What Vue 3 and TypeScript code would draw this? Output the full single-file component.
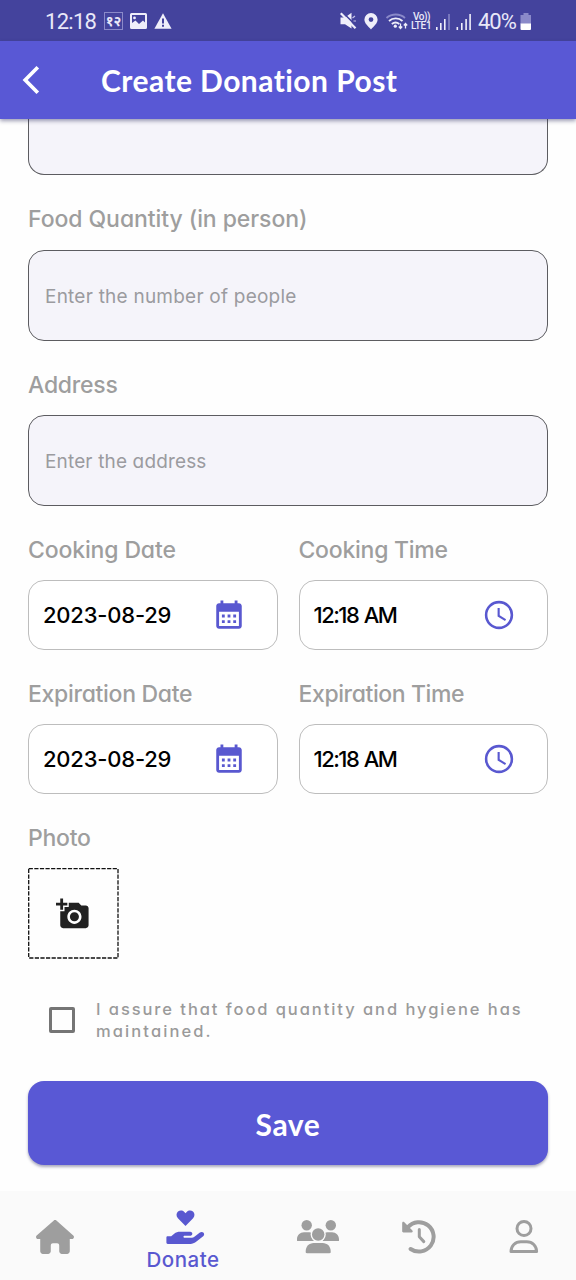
<script setup lang="ts">
import { ref } from 'vue'

interface Slot {
  label: string
  value: string
  kind: 'date' | 'time'
  key: string
}

const slots: Slot[] = [
  { key: 'cd', label: 'Cooking Date', value: '2023-08-29', kind: 'date' },
  { key: 'ct', label: 'Cooking Time', value: '12:18 AM', kind: 'time' },
  { key: 'ed', label: 'Expiration Date', value: '2023-08-29', kind: 'date' },
  { key: 'et', label: 'Expiration Time', value: '12:18 AM', kind: 'time' },
]

const assured = ref(false)
</script>

<template>
  <div class="screen">
    <div class="status">
      <span class="clock">12:18</span>
      <span class="lang">१२</span>
      <svg class="pic" width="17" height="16" viewBox="0 0 17 16">
        <path fill="#efeefa" fill-rule="evenodd" d="M1.500 0h14A1.500 1.500 0 0 1 17 1.500v13a1.500 1.500 0 0 1-1.500 1.500h-14A1.500 1.500 0 0 1 0 14.500v-13A1.500 1.500 0 0 1 1.500 0zM2 2v8l3.500-2.500L9 11l4-3.500 2 2V2zM4.500 3.500a1.400 1.400 0 1 1 0 2.800a1.400 1.400 0 0 1 0-2.800z" />
      </svg>
      <svg class="warn" width="18" height="16" viewBox="0 0 18 16">
        <path fill="#efeefa" d="M9 .3 17.600 15.700H.4z" />
        <path fill="#44439d" d="M8 5.500h2v5H8zM8 11.800h2v2H8z" />
      </svg>
      <span class="grow"></span>
      <svg class="radio" width="70" height="20" viewBox="338 10 70 20">
        <path fill="#efeefa" d="M340.500 16.500h4.500l6.500-4.700v15.800L345 23.200h-4.500z" />
        <path d="M342.300 11 357.500 26.200" stroke="#44439d" stroke-width="1.700" />
        <path d="M340.800 12.300 355.500 27.300" stroke="#efeefa" stroke-width="2.200" />
        <path d="M352.500 17l2.500-2M353.500 20h2.500" stroke="#c5c4e8" stroke-width="1.200" />
        <path fill="#efeefa" fill-rule="evenodd" d="M371 12a6.600 6.600 0 0 1 6.600 6.600c0 4-4 7-6.600 9.900-2.600-2.900-6.600-5.900-6.600-9.900A6.600 6.600 0 0 1 371 12zm0 4.200a2.400 2.400 0 1 0 0 4.800a2.400 2.400 0 0 0 0-4.800z" />
        <g fill="none" stroke="#efeefa" stroke-width="1.800">
          <path d="M386.500 17a14 14 0 0 1 18.500 0" stroke="#8a89c9" />
          <path d="M389 20a10 10 0 0 1 13.500 0" />
          <path d="M391.800 23a6 6 0 0 1 7.500 0" />
        </g>
        <circle cx="395.300" cy="25.200" r="1.600" fill="#efeefa" />
        <path d="M400.500 22.500v5M398.800 25.500l1.700 2 1.700-2M405.500 27.500v-5M403.800 24.500l1.700-2 1.700 2" fill="none" stroke="#efeefa" stroke-width="1.300" />
      </svg>
      <span class="volte"><span class="vo">Vo))</span><span>LTE1</span></span>
      <svg class="bars" width="37" height="18" viewBox="435 11 37 18">
        <g fill="#efeefa">
          <path d="M436 26h1.600v3H436zM440 22h1.600v7H440zM444 18h1.600v11H444z" />
          <path d="M456.500 26h1.600v3h-1.600zM461 22h1.600v7H461zM465.300 18h1.600v11h-1.600zM469.300 13h1.600v16h-1.600z" />
        </g>
        <path fill="#7877bd" d="M448 13h2v16h-2z" />
      </svg>
      <span class="pct">40%</span>
      <svg class="batt" width="12" height="17" viewBox="0 0 12 17">
        <path fill="#8a89c9" d="M3.500 0h5v2H11v9H.5V2h3z" />
        <path fill="#fff" d="M.5 10.500H11V16a1 1 0 0 1-1 1H1.500a1 1 0 0 1-1-1z" />
      </svg>
    </div>

    <header class="bar">
      <svg class="back" width="20" height="30" viewBox="0 0 20 30">
        <path d="M16.800 2.300 4.200 15 16.800 27.700" fill="none" stroke="#fff" stroke-width="3.700" />
      </svg>
      <h1>Create Donation Post</h1>
    </header>

    <main class="form">
      <div class="input first"></div>
      <label class="label tall l1">Food Quantity (in person)</label>
      <div class="input"><span class="hint1">Enter the number of people</span></div>
      <label class="label l2">Address</label>
      <div class="input"><span class="hint2">Enter the address</span></div>

      <div class="grid">
        <div v-for="s in slots" :key="s.key">
          <div class="label" :class="s.key">{{ s.label }}</div>
          <div class="slot">
            <span :class="s.kind">{{ s.value }}</span>
            <svg :class="'i-' + s.kind" width="34" height="34" viewBox="0 0 24 24" fill="#5958d0">
              <path v-if="s.kind === 'date'" d="M7 11H9V13H7V11M21 5V19C21 20.110 20.110 21 19 21H5C3.890 21 3 20.100 3 19V5C3 3.900 3.900 3 5 3H6V1H8V3H16V1H18V3H19C20.110 3 21 3.900 21 5M5 19H19V9H5V19M15 13V11H17V13H15M11 13V11H13V13H11M7 15H9V17H7V15M15 17V15H17V17H15M11 17V15H13V17H11Z" />
              <path v-else fill-rule="evenodd" d="M12 2a10 10 0 1 0 0 20a10 10 0 0 0 0-20zM12 3.800a8.200 8.200 0 1 1 0 16.400a8.200 8.200 0 0 1 0-16.400zM12.500 7H11v6l5.250 3.150.75-1.230-4.500-2.670z" />
            </svg>
          </div>
        </div>
      </div>

      <div class="label ph">Photo</div>
      <div class="photo">
        <svg class="dash" width="91" height="91" viewBox="0 0 91 91">
          <rect x=".7" y=".7" width="89.300" height="89.300" fill="none" stroke="#111" stroke-width="1.300" stroke-dasharray="4.200 1.400" />
        </svg>
        <svg class="cam" width="34" height="34" viewBox="0 0 24 24" fill="#212121">
          <path d="M3 4V1h2v3h3v2H5v3H3V6H0V4h3zm3 6V7h3V4h7l1.830 2H21c1.100 0 2 .9 2 2v12c0 1.100-.9 2-2 2H5c-1.100 0-2-.9-2-2V10h3zm7 9c2.760 0 5-2.240 5-5s-2.240-5-5-5-5 2.240-5 5 2.240 5 5 5zm-3.200-5c0 1.770 1.430 3.200 3.200 3.200s3.200-1.430 3.200-3.200-1.430-3.200-3.200-3.200-3.200 1.430-3.200 3.200z" />
        </svg>
      </div>

      <div class="assure" @click="assured = !assured">
        <span class="box" :class="{ on: assured }"></span>
        <p><span class="a1">I assure that food quantity and hygiene has</span><br /><span class="a2">maintained.</span></p>
      </div>

      <button class="save">Save</button>
    </main>

    <nav class="tabs">
      <svg class="t-home" width="38" height="34" viewBox="0 0 576 512" fill="#9e9e9e">
        <path d="M575.800 255.500c0 18-15 32.100-32 32.100h-32l.7 160.200c0 2.700-.2 5.400-.5 8.100V472c0 22.100-17.900 40-40 40H392c-22.100 0-40-17.900-40-40V384c0-17.700-14.300-32-32-32H256c-17.700 0-32 14.300-32 32v88c0 22.100-17.900 40-40 40H104c-22.100 0-40-17.900-40-40V287.600H32c-18 0-32-14-32-32.100c0-9 3-17 10-24L266.400 8c7-7 15-8 22-8s15 2 21 7L564.800 231.500c8 7 12 15 11 24z" />
      </svg>
      <div class="t-donate">
        <svg width="40" height="36" viewBox="0 0 40 36" fill="#5958d0">
          <path d="M20.500 16 12.900 8.300C11 6.300 11.100 3.200 13 1.600c2-1.600 4.600-1.300 6.300.4l1.200 1.200L21.700 2c1.700-1.700 4.300-2 6.300-.4 1.900 1.600 2 4.700.1 6.700z" />
          <path d="M2.700 26.300h3.500l3-2.600c1.700-1.400 3.700-2 5.800-2h10.300c1.300 0 2.200 1 2 2.200-.2 1.100-1.100 1.900-2.200 1.900h-5.600c-.6 0-1 .4-1 1s.4 1 1 1h7.300c1 0 1.800-.4 2.600-1l5.500-4.300c1.100-.9 2.800-.8 3.700.3.900 1.100.7 2.600-.4 3.400l-7.400 5.900c-1.500 1.200-3.300 1.800-5.200 1.800H2.700c-.8 0-1.300-.5-1.300-1.300v-5c0-.8.500-1.300 1.300-1.300z" />
        </svg>
        <span>Donate</span>
      </div>
      <svg class="t-group" width="42" height="34" viewBox="0 0 42 34" fill="#9e9e9e">
        <circle cx="9.700" cy="5.300" r="5.200" />
        <circle cx="33.800" cy="5.300" r="5.200" />
        <path d="M0 20.700v-1.500c0-4 3-7 7-7h5.200c1 0 1.800.2 2.600.5-.8 3 .1 6 2.200 8.300H.8a.8.800 0 0 1-.8-.3zM42 20.700v-1.500c0-4-3-7-7-7h-4.700c-1 0-1.800.2-2.600.5.800 3-.1 6-2.200 8.300h15.700a.8.800 0 0 0 .8-.3z" />
        <circle cx="21.200" cy="14.500" r="7.600" fill="#fafafa" />
        <circle cx="21.200" cy="14.500" r="6.200" />
        <path d="M8.700 32v-1c0-4.400 3.600-8 8-8h9c4.400 0 8 3.600 8 8v1c0 .8-.5 1.200-1.200 1.200H9.900c-.7 0-1.200-.4-1.200-1.200z" />
      </svg>
      <svg class="t-history" width="36" height="35" viewBox="0 0 36 35">
        <path d="M6.800 7.300A14.700 14.700 0 1 1 9.600 29" fill="none" stroke="#9e9e9e" stroke-width="4" stroke-linecap="round" />
        <path d="M1.200 2.900c0-1 1.200-1.500 1.900-.8l8.300 8.300c.7.700.2 2-.8 2H2.400c-.7 0-1.200-.5-1.200-1.200z" fill="#9e9e9e" />
        <path d="M18.300 9.500v7.300l4.500 4.800" fill="none" stroke="#9e9e9e" stroke-width="3" stroke-linecap="round" stroke-linejoin="round" />
      </svg>
      <svg class="t-user" width="30" height="34" viewBox="0 0 30 34" fill="none" stroke="#9e9e9e" stroke-width="3">
        <circle cx="15" cy="8.500" r="7" />
        <path d="M2 31.500c0-5.700 4.300-9.800 9.800-9.800h6c5.500 0 9.800 4.100 9.800 9.800z" stroke-linejoin="round" />
      </svg>
    </nav>
  </div>
</template>

<style>
body {
  margin: 0;
  background: #fff;
}
</style>

<style scoped>
.screen {
  width: 576px;
  height: 1280px;
  display: flex;
  flex-direction: column;
  overflow: hidden;
  background: #fefefe;
  font-family: Inter, "Liberation Sans", sans-serif;
  font-feature-settings: "cv11";
}
.screen *, .screen { box-sizing: border-box; }
svg { display: block; flex: none; }

.status {
  height: 41px;
  flex: none;
  display: flex;
  align-items: center;
  background: #44439d;
  color: #e9e8f8;
  font-family: Roboto, sans-serif;
  padding: 1px 44px 0 45px;
}
.clock { font-size: 22px; letter-spacing: -0.7px; width: 59px; white-space: nowrap; }
.lang {
  width: 19px;
  height: 18px;
  border: 1px solid #8a89c9;
  font: 700 14px/16px "Noto Sans", sans-serif;
  text-align: center;
}
.pic { margin-left: 7px; }
.warn { margin-left: 7px; }
.grow { flex: 1; }
.volte {
  width: 24px;
  margin-left: 3px;
  font-size: 10px;
  line-height: 9px;
  font-weight: 500;
  letter-spacing: -0.35px;
  display: flex;
  flex-direction: column;
  white-space: nowrap;
}
.vo { padding-left: 2px; letter-spacing: -0.5px; }
.pct { font-size: 22px; width: 42px; margin-left: 6px; letter-spacing: -1px; }

.bar {
  height: 78px;
  flex: none;
  display: flex;
  align-items: center;
  background: #5958d5;
  box-shadow: 0 2px 4px rgba(40, 40, 90, .45);
  z-index: 1;
  padding-left: 21px;
}
.bar h1 {
  margin: 0 0 0 60px;
  color: #fff;
  font: 700 30px/40px Lato, sans-serif;
  letter-spacing: 0.450px;
}

.form { padding: 0 28px; flex: none; height: 1072px; }
.input {
  height: 91px;
  border: 1px solid #5c5c60;
  border-radius: 16px;
  background: #f5f4fa;
  display: flex;
  align-items: center;
  padding: 1px 0 0 16px;
  color: #9b9b9f;
  font-size: 19px;
  white-space: nowrap;
}
.input.first { height: 56px; border-top: 0; border-radius: 0 0 16px 16px; }
.label {
  display: block;
  height: 74px;
  padding-top: 29px;
  color: #9e9e9e;
  font-size: 23px;
  line-height: 30px;
  font-weight: 500;
  letter-spacing: -0.250px;
  white-space: nowrap;
}
.label.tall { height: 75px; padding-top: 29px; }
.label.l1 { letter-spacing: -0.070px; }
.label.cd { letter-spacing: -0.140px; }
.label.ed { letter-spacing: -0.300px; }
.label.et { letter-spacing: -0.400px; }
.hint1 { letter-spacing: 0.230px; }
.hint2 { letter-spacing: 0.150px; }
.grid { display: grid; grid-template-columns: 250px 249.500px; column-gap: 20.500px; }
.slot {
  height: 70px;
  border: 1px solid #bdbdbd;
  border-radius: 16px;
  background: #fff;
  display: flex;
  align-items: center;
  justify-content: space-between;
  padding: 0 31px 0 14px;
  color: #000;
  font-size: 22px;
  font-weight: 500;
}
.date { letter-spacing: -0.200px; }
.time { letter-spacing: -1.500px; word-spacing: 1px; }
.i-date { margin-top: 2px; }
.photo { width: 91px; height: 91px; display: grid; place-items: center; }
.photo > svg { grid-area: 1 / 1; }
.cam { margin-right: 2px; }
.assure {
  height: 122px;
  display: flex;
  align-items: center;
  padding-left: 21px;
}
.box { width: 26px; height: 26px; border: 3px solid #757575; border-radius: 2px; }
.box.on { background: #5958d5; }
.assure p {
  margin: -1px 0 0 21px;
  color: #9a9a9a;
  font-size: 16.500px;
  line-height: 22px;
  font-weight: 500;
  letter-spacing: 1.930px;
  white-space: nowrap;
}
.a2 { letter-spacing: 2.100px; }
.save {
  display: block;
  width: 520px;
  height: 84px;
  border: 0;
  border-radius: 16px;
  background: #5958d5;
  box-shadow: 0 2px 3px rgba(40, 40, 90, .4);
  color: #fff;
  font: 700 30px/40px Lato, sans-serif;
  letter-spacing: 0.600px;
  padding: 2px 0 0;
}
.tabs {
  height: 89px;
  flex: none;
  background: #fafafa;
  display: flex;
  align-items: flex-start;
  padding: 29px 0 0 36px;
}
.t-donate {
  width: 74px;
  margin: -10px 0 0 72px;
  display: flex;
  flex-direction: column;
  align-items: center;
  color: #5958d0;
}
.t-donate svg { margin-left: 3px; }
.t-donate span {
  font-size: 20.500px;
  line-height: 28px;
  font-weight: 500;
  letter-spacing: 0.500px;
  font-feature-settings: normal;
}
.t-group { margin-left: 77px; }
.t-history { margin-left: 62px; }
.t-user { margin-left: 72px; }
</style>
